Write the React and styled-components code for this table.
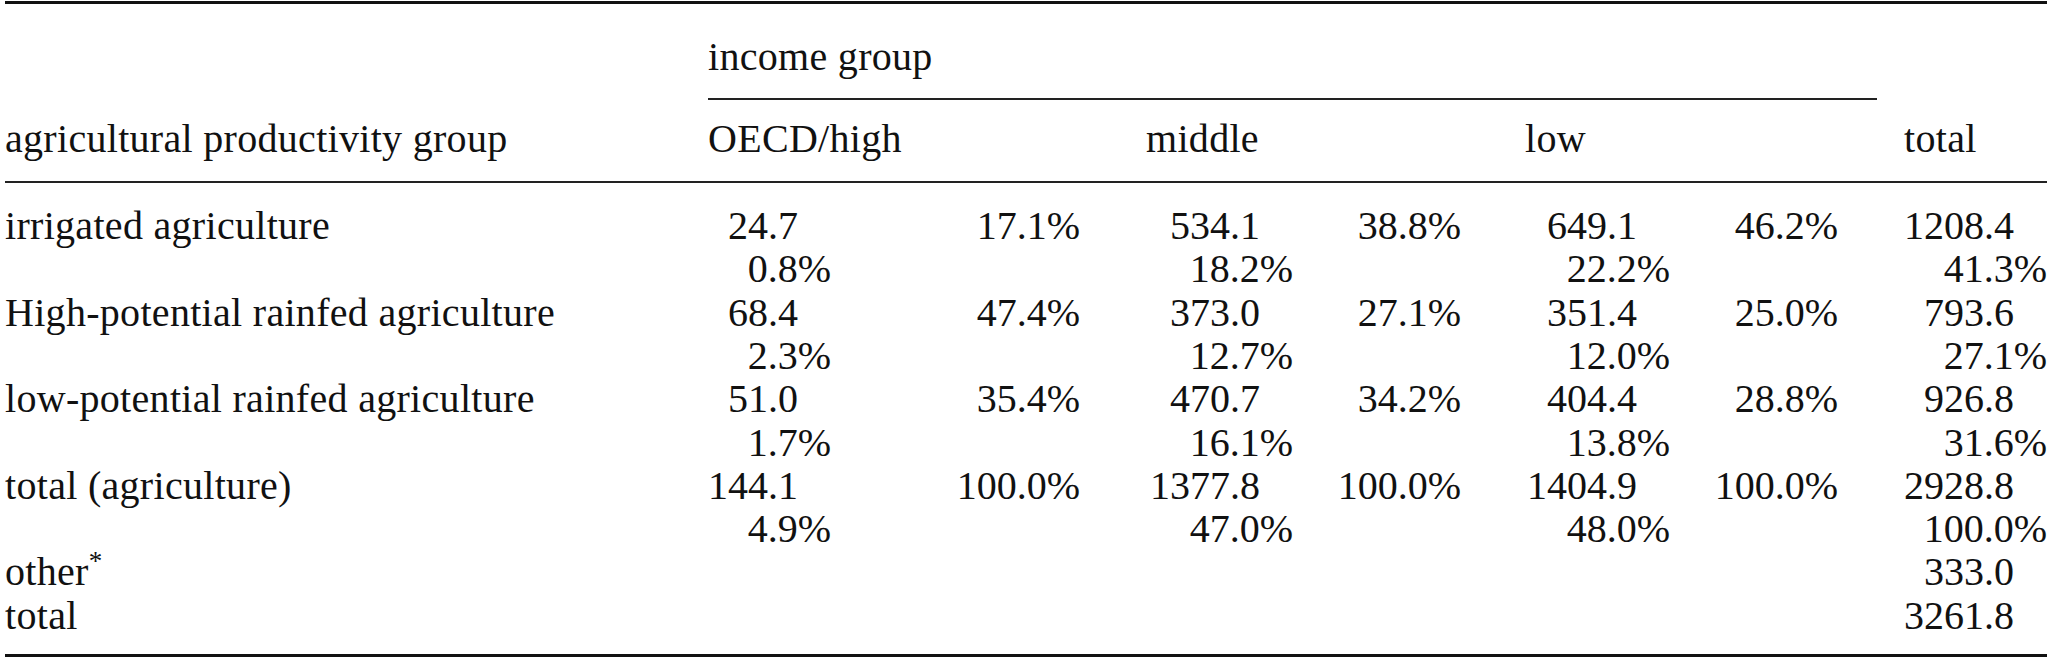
import React from "react";
import styled, { createGlobalStyle } from "styled-components";

const GlobalStyle = createGlobalStyle`
  html, body {
    margin: 0;
    padding: 0;
    background: #fff;
  }
`;

const Page = styled.div`
  padding-left: 5px;
`;

const Table = styled.table`
  width: 2042px;
  table-layout: fixed;
  border-collapse: separate;
  border-spacing: 0;
  border-top: 3px solid #111;
  border-bottom: 3px solid #111;
  margin-top: 1px;
  color: #111;

  th,
  td {
    font-family: "Liberation Serif", "DejaVu Serif", serif;
    font-size: 40px;
    line-height: 43.3px;
  }
`;

const Head = styled.th`
  font-weight: normal;
  text-align: left;
  padding: 0;
  padding-left: ${(p) => p.$indent || 0}px;
  vertical-align: bottom;
  white-space: nowrap;
  letter-spacing: 0.3px;
`;

const Spanner = styled(Head)`
  padding-top: 30.5px;
  padding-bottom: 20px;
  border-bottom: 2px solid #222;
`;

const GroupHead = styled(Head)`
  padding-top: ${(p) => (p.$tall ? 0 : 17.5)}px;
  padding-bottom: 20px;
  border-bottom: 2px solid #222;
`;

const Row = styled.tr`
  & > td {
    padding-top: ${(p) => (p.$first ? 21.5 : 0)}px;
    padding-bottom: ${(p) => (p.$last ? 16.5 : 0)}px;
  }
`;

const Label = styled.td`
  padding: 0;
  vertical-align: top;
  white-space: nowrap;
  letter-spacing: 0.3px;
`;

const Sup = styled.sup`
  font-size: 27px;
  line-height: 0;
  vertical-align: 15px;
`;

const ValueCell = styled.td`
  padding: 0;
  text-align: right;
  vertical-align: top;
  white-space: nowrap;
`;

const Amount = styled.div`
  padding-right: 33px;
`;

const Share = styled.div``;

const PctCell = styled.td`
  padding: 0;
  padding-right: ${(p) => p.$gap}px;
  text-align: right;
  vertical-align: top;
  white-space: nowrap;
`;

const groups = [
  { name: "OECD/high", gap: 66 },
  { name: "middle", gap: 64 },
  { name: "low", gap: 39 },
];

const rows = [
  {
    label: "irrigated agriculture",
    cells: [
      ["24.7", "0.8%", "17.1%"],
      ["534.1", "18.2%", "38.8%"],
      ["649.1", "22.2%", "46.2%"],
    ],
    total: ["1208.4", "41.3%"],
  },
  {
    label: "High-potential rainfed agriculture",
    cells: [
      ["68.4", "2.3%", "47.4%"],
      ["373.0", "12.7%", "27.1%"],
      ["351.4", "12.0%", "25.0%"],
    ],
    total: ["793.6", "27.1%"],
  },
  {
    label: "low-potential rainfed agriculture",
    cells: [
      ["51.0", "1.7%", "35.4%"],
      ["470.7", "16.1%", "34.2%"],
      ["404.4", "13.8%", "28.8%"],
    ],
    total: ["926.8", "31.6%"],
  },
  {
    label: "total (agriculture)",
    cells: [
      ["144.1", "4.9%", "100.0%"],
      ["1377.8", "47.0%", "100.0%"],
      ["1404.9", "48.0%", "100.0%"],
    ],
    total: ["2928.8", "100.0%"],
  },
];

const App = () => {
  return (
    <Page>
      <GlobalStyle />
      <Table>
        <colgroup>
          <col style={{ width: 703 }} />
          <col style={{ width: 123 }} />
          <col style={{ width: 315 }} />
          <col style={{ width: 147 }} />
          <col style={{ width: 232 }} />
          <col style={{ width: 145 }} />
          <col style={{ width: 207 }} />
          <col style={{ width: 170 }} />
        </colgroup>
        <thead>
          <tr>
            <GroupHead rowSpan={2} $tall>
              agricultural productivity group
            </GroupHead>
            <Spanner colSpan={6}>income group</Spanner>
            <GroupHead rowSpan={2} $tall $indent={27}>
              total
            </GroupHead>
          </tr>
          <tr>
            {groups.map((g) => (
              <GroupHead key={g.name} colSpan={2}>
                {g.name}
              </GroupHead>
            ))}
          </tr>
        </thead>
        <tbody>
          {rows.map((r, i) => (
            <Row key={r.label} $first={i === 0}>
              <Label>{r.label}</Label>
              {r.cells.map((c, j) => (
                <React.Fragment key={j}>
                  <ValueCell>
                    <Amount>{c[0]}</Amount>
                    <Share>{c[1]}</Share>
                  </ValueCell>
                  <PctCell $gap={groups[j].gap}>{c[2]}</PctCell>
                </React.Fragment>
              ))}
              <ValueCell>
                <Amount>{r.total[0]}</Amount>
                <Share>{r.total[1]}</Share>
              </ValueCell>
            </Row>
          ))}
          <Row>
            <Label>
              other<Sup>*</Sup>
            </Label>
            <td colSpan={6} />
            <ValueCell>
              <Amount>333.0</Amount>
            </ValueCell>
          </Row>
          <Row $last>
            <Label>total</Label>
            <td colSpan={6} />
            <ValueCell>
              <Amount>3261.8</Amount>
            </ValueCell>
          </Row>
        </tbody>
      </Table>
    </Page>
  );
};

export default App;
